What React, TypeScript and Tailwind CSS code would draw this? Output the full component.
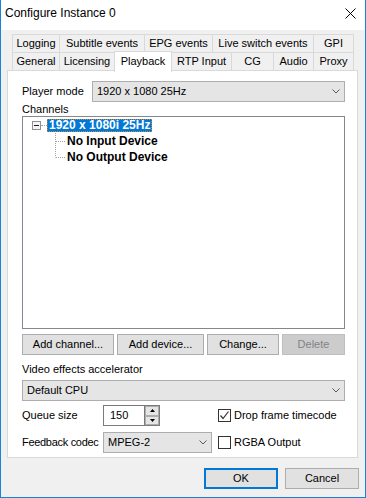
import React from "react";

const rowOne = [
  { label: "Logging", w: "w-[47px]" },
  { label: "Subtitle events", w: "w-[85px]" },
  { label: "EPG events", w: "w-[68px]" },
  { label: "Live switch events", w: "w-[101px]" },
  { label: "GPI", w: "w-[41px]", last: true },
];

const rowTwo = [
  { label: "General", w: "w-[47px]" },
  { label: "Licensing", w: "w-[55px]" },
  { label: "Playback", w: "w-[58px]", active: true },
  { label: "RTP Input", w: "w-[60px]" },
  { label: "CG", w: "w-[42px]" },
  { label: "Audio", w: "w-[40px]" },
  { label: "Proxy", w: "w-[41px]", last: true },
];

function Chevron() {
  return (
    <svg width="8" height="5" viewBox="0 0 8 5" className="shrink-0">
      <path d="M0.5 0.5 L4 4 L7.5 0.5" fill="none" stroke="#5a5a5a" strokeWidth="1" />
    </svg>
  );
}

function Combo({ value, className }: { value: string; className: string }) {
  return (
    <div
      className={`h-[21px] flex items-center justify-between border border-[#adadad] bg-[#e5e5e5] pl-[4px] pr-[4px] ${className}`}
    >
      <span>{value}</span>
      <Chevron />
    </div>
  );
}

function Btn({ label, className, disabled }: { label: string; className: string; disabled?: boolean }) {
  return (
    <div
      className={`h-[21px] flex items-center justify-center border ${
        disabled ? "border-[#bfbfbf] bg-[#cccccc] text-[#838383]" : "border-[#adadad] bg-[#e1e1e1]"
      } ${className}`}
    >
      {label}
    </div>
  );
}

function Check({ checked, label }: { checked?: boolean; label: string }) {
  return (
    <div className="flex items-center">
      <div className="w-[13px] h-[13px] border border-[#333333] bg-white flex items-center justify-center">
        {checked && (
          <svg width="11" height="11" viewBox="0 0 11 11">
            <path d="M1.5 5.5 L4 8.5 L9.5 1.5" fill="none" stroke="#333333" strokeWidth="1.2" />
          </svg>
        )}
      </div>
      <span className="ml-[3px]">{label}</span>
    </div>
  );
}

function TreeLink({ last }: { last?: boolean }) {
  return (
    <svg width="12" height="16" viewBox="0 0 12 16" className="shrink-0">
      <path d={last ? "M0.5 0 V8.5" : "M0.5 0 V16"} stroke="#a0a0a0" strokeDasharray="1 1" />
      <path d="M1 8.5 H10" stroke="#a0a0a0" strokeDasharray="1 1" />
    </svg>
  );
}

export default function App() {
  return (
    <div className="w-[366px] h-[498px] flex flex-col border-x border-b border-[#1883d7] bg-white text-[11px] text-black font-['Liberation_Sans',Arial,sans-serif]">
      {/* Title bar */}
      <div className="h-[30px] shrink-0 flex items-start justify-between pl-[4px] pt-[5px]">
        <span className="text-[12px] leading-[16px]">Configure Instance 0</span>
        <svg width="11" height="11" viewBox="0 0 11 11" className="mt-[3px] mr-[9px]">
          <path d="M0.5 0.5 L10.5 10.5 M10.5 0.5 L0.5 10.5" stroke="#000" strokeWidth="1" />
        </svg>
      </div>

      {/* Body */}
      <div className="flex-1 flex flex-col bg-[#f0f0f0] pt-[4px]">
        {/* Tabs */}
        <div className="ml-[11px] flex h-[18px]">
          {rowOne.map((t) => (
            <div
              key={t.label}
              className={`${t.w} h-[18px] flex items-center justify-center border-l border-t border-[#d9d9d9] ${
                t.last ? "border-r" : ""
              }`}
            >
              {t.label}
            </div>
          ))}
        </div>
        <div className="ml-[11px] flex items-start h-[18px]">
          {rowTwo.map((t) =>
            t.active ? (
              <div
                key={t.label}
                className={`${t.w} relative z-10 -mt-px -mr-px h-[21px] flex items-start justify-center pt-[1px] border-l border-t border-r border-[#d9d9d9] bg-white`}
              >
                {t.label}
              </div>
            ) : (
              <div
                key={t.label}
                className={`${t.w} h-[18px] flex items-center justify-center border-l border-t border-[#d9d9d9] ${
                  t.last ? "border-r" : ""
                }`}
              >
                {t.label}
              </div>
            )
          )}
        </div>

        {/* Panel */}
        <div className="ml-[6px] w-[351px] h-[388px] shrink-0 flex flex-col border border-[#d9d9d9] bg-white pl-[14px] pr-[12px] pt-[10px]">
          <div className="flex items-center">
            <span className="w-[70px]">Player mode</span>
            <Combo value="1920 x 1080 25Hz" className="flex-1" />
          </div>
          <div className="h-[14px] leading-[14px]">Channels</div>

          {/* Tree */}
          <div className="h-[213px] border border-[#828790] bg-white pl-[9px] text-[12px] font-bold">
            <div className="flex items-center h-[16px]">
              <div className="w-[9px] h-[9px] border border-[#919191] bg-[#f4f4f4] flex items-center justify-center">
                <div className="w-[5px] h-px bg-[#1f1f1f]" />
              </div>
              <div className="w-[6px] border-t border-dotted border-[#a0a0a0]" />
              <span className="h-[13px] flex items-center px-px border border-dotted border-[#c88a3a] bg-[#0078d7] text-white leading-none">
                1920 x 1080i 25Hz
              </span>
            </div>
            <div className="flex items-center h-[16px] pl-[23px]">
              <TreeLink />
              <span>No Input Device</span>
            </div>
            <div className="flex items-center h-[16px] pl-[23px]">
              <TreeLink last />
              <span>No Output Device</span>
            </div>
          </div>

          <div className="mt-[5px] flex gap-[3px]">
            <Btn label="Add channel..." className="w-[92px]" />
            <Btn label="Add device..." className="w-[87px]" />
            <Btn label="Change..." className="w-[72px]" />
            <Btn label="Delete" className="w-[63px]" disabled />
          </div>

          <div className="mt-[7px] h-[14px] leading-[14px]">Video effects accelerator</div>
          <Combo value="Default CPU" className="mt-[4px]" />

          <div className="mt-[4px] flex items-center">
            <div className="w-[196px] flex items-center">
              <span className="w-[81px]">Queue size</span>
              <div className="flex h-[21px]">
                <div className="w-[41px] flex items-center pl-[6px] border border-r-0 border-[#7a7a7a] bg-white">
                  150
                </div>
                <div className="w-[16px] flex flex-col border border-[#7a7a7a] bg-white">
                  <div className="flex-1 flex items-center justify-center border border-[#adadad] bg-[#e5e5e5]">
                    <svg width="5" height="3" viewBox="0 0 5 3">
                      <path d="M0 3 L2.5 0 L5 3 Z" fill="#000" />
                    </svg>
                  </div>
                  <div className="flex-1 flex items-center justify-center border border-[#adadad] bg-[#e5e5e5]">
                    <svg width="5" height="3" viewBox="0 0 5 3">
                      <path d="M0 0 L2.5 3 L5 0 Z" fill="#000" />
                    </svg>
                  </div>
                </div>
              </div>
            </div>
            <Check checked label="Drop frame timecode" />
          </div>

          <div className="mt-[6px] flex items-center">
            <div className="w-[196px] flex items-center">
              <span className="w-[81px] whitespace-nowrap tracking-[-0.3px]">Feedback codec</span>
              <Combo value="MPEG-2" className="w-[109px]" />
            </div>
            <Check label="RGBA Output" />
          </div>
        </div>

        {/* Dialog buttons */}
        <div className="mt-[10px] mr-[6px] flex justify-end gap-[7px]">
          <div className="w-[74px] h-[21px] flex items-center justify-center border-2 border-[#0078d7] bg-[#e1e1e1]">
            OK
          </div>
          <div className="w-[74px] h-[21px] flex items-center justify-center border border-[#adadad] bg-[#e1e1e1]">
            Cancel
          </div>
        </div>
      </div>
    </div>
  );
}
